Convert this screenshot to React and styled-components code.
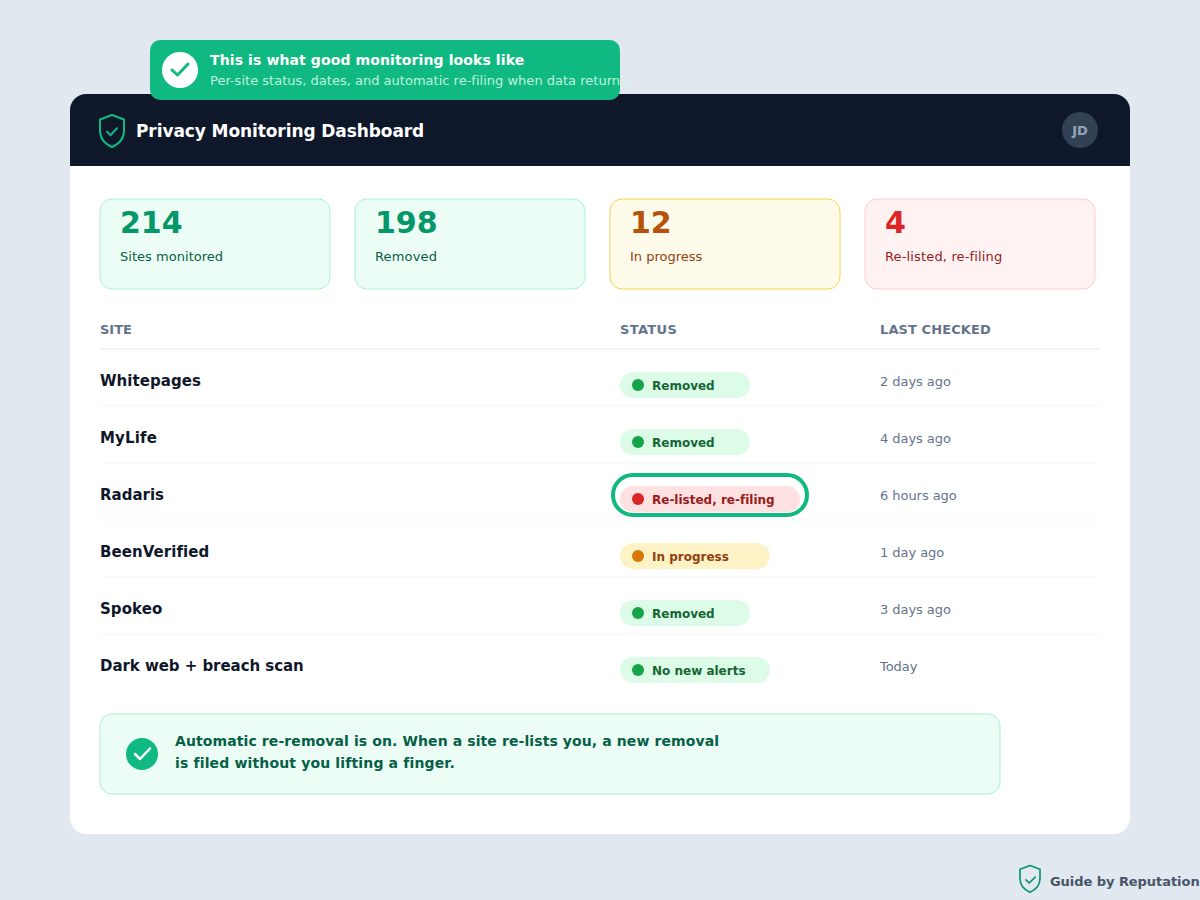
import React from "react";
import styled, { createGlobalStyle, css } from "styled-components";

const GlobalStyle = createGlobalStyle`
  *, *::before {
    box-sizing: border-box;
  }
  body {
    margin: 0;
    background: #e2e8f0;
    font-family: "DejaVu Sans", sans-serif;
    font-variant-ligatures: none;
  }
  p, h1 {
    margin: 0;
  }
`;

const tones = {
  green: {
    fill: "#ecfdf5",
    border: "#a7f3d0",
    value: "#059669",
    label: "#065f46",
    pill: "#dcfce7",
    dot: "#16a34a",
    text: "#166534",
  },
  amber: {
    fill: "#fffbeb",
    border: "#fcd34d",
    value: "#b45309",
    label: "#92400e",
    pill: "#fef3c7",
    dot: "#d97706",
    text: "#92400e",
  },
  red: {
    fill: "#fef2f2",
    border: "#fecaca",
    value: "#dc2626",
    label: "#991b1b",
    pill: "#fee2e2",
    dot: "#dc2626",
    text: "#991b1b",
  },
};

const stats = [
  { value: "214", label: "Sites monitored", tone: "green", tracking: 0.03 },
  { value: "198", label: "Removed", tone: "green", tracking: 0.15 },
  { value: "12", label: "In progress", tone: "amber" },
  { value: "4", label: "Re-listed, re-filing", tone: "red", tracking: 0.15 },
];

const sites = [
  { name: "Whitepages", status: "Removed", tone: "green", width: 130, checked: "2 days ago" },
  { name: "MyLife", status: "Removed", tone: "green", width: 130, checked: "4 days ago", tracking: 0.15 },
  { name: "Radaris", status: "Re-listed, re-filing", tone: "red", width: 180, checked: "6 hours ago", highlight: true, tracking: 0 },
  { name: "BeenVerified", status: "In progress", tone: "amber", width: 150, checked: "1 day ago" },
  { name: "Spokeo", status: "Removed", tone: "green", width: 130, checked: "3 days ago" },
  { name: "Dark web + breach scan", status: "No new alerts", tone: "green", width: 150, checked: "Today", tracking: -0.05 },
];

// hairline frame that sits on the half pixel, so it stays soft
const softFrame = css`
  position: relative;
  z-index: 0;
  &::before {
    content: "";
    position: absolute;
    z-index: -1;
    top: 0;
    left: 0;
    width: calc(100% - 1px);
    height: calc(100% - 1px);
    transform: translate(0.5px, 0.5px);
    border: 1px solid ${({ $tone }) => tones[$tone].border};
    border-radius: 12.5px;
    background: ${({ $tone }) => tones[$tone].fill};
  }
`;

const Page = styled.div`
  position: relative;
  display: flex;
  flex-direction: column;
  width: 1200px;
  height: 900px;
  padding: 94px 0 0 70px;
  overflow: hidden;
  background: #e2e8f0;
`;

const Banner = styled.div`
  position: absolute;
  top: 40px;
  left: 150px;
  z-index: 1;
  display: flex;
  gap: 12px;
  width: 470px;
  height: 60px;
  padding: 12px;
  border-radius: 10px;
  background: #10b981;
  white-space: nowrap;
  svg {
    flex-shrink: 0;
  }
`;

const BannerTitle = styled.p`
  font-size: 14px;
  font-weight: 700;
  line-height: 16px;
  letter-spacing: 0.11px;
  color: #ffffff;
`;

const BannerText = styled.p`
  margin-top: 5px;
  font-size: 13px;
  line-height: 16px;
  letter-spacing: 0.01px;
  color: #d1fae5;
  opacity: 0.9;
`;

const Card = styled.div`
  width: 1060px;
  height: 740px;
  flex-shrink: 0;
  border-radius: 16px;
  background: #ffffff;
`;

const Header = styled.header`
  display: flex;
  align-items: center;
  height: 72px;
  padding: 0 32px 0 28px;
  border-radius: 16px 16px 0 0;
  background: #0f172a;
`;

const Title = styled.h1`
  margin-left: 10px;
  padding-top: 2px;
  font-size: 17px;
  font-weight: 700;
  line-height: 20px;
  letter-spacing: -0.09px;
  color: #ffffff;
`;

const Avatar = styled.div`
  margin-left: auto;
  width: 36px;
  height: 36px;
  border-radius: 50%;
  background: #334155;
  color: #94a3b8;
  font-size: 13px;
  font-weight: 700;
  line-height: 37px;
  text-align: center;
`;

const Body = styled.div`
  padding: 32px 29px 0;
`;

const StatGrid = styled.div`
  display: grid;
  grid-template-columns: repeat(4, 232px);
  column-gap: 23px;
`;

const StatCard = styled.div`
  ${softFrame}
  height: 92px;
  padding: 7px 21px;
`;

const StatValue = styled.p`
  font-size: 30px;
  font-weight: 700;
  line-height: 36px;
  color: ${({ $tone }) => tones[$tone].value};
`;

const StatLabel = styled.p`
  margin-top: 8px;
  font-size: 13px;
  line-height: 16px;
  letter-spacing: ${({ $tracking = 0 }) => $tracking}px;
  color: ${({ $tone }) => tones[$tone].label};
`;

const Table = styled.div`
  margin: 32px 0 0 1px;
  width: 1000px;
`;

const Row = styled.div`
  display: grid;
  grid-template-columns: 520px 260px 220px;
  height: 57px;
  border-bottom: 2px solid ${({ $last }) => ($last ? "transparent" : "#f8fafc")};
`;

const HeadRow = styled(Row)`
  height: 28px;
  border-bottom-color: #f1f5f9;
`;

const HeadCell = styled.div`
  font-size: 13px;
  font-weight: 700;
  line-height: 15px;
  letter-spacing: ${({ $tracking = 0 }) => $tracking}px;
  color: #64748b;
`;

const SiteName = styled.div`
  padding-top: 21px;
  font-size: 15px;
  font-weight: 700;
  line-height: 20px;
  letter-spacing: ${({ $tracking = 0.07 }) => $tracking}px;
  color: #0f172a;
`;

const Checked = styled.div`
  padding-top: 22px;
  font-size: 13px;
  line-height: 20px;
  letter-spacing: -0.05px;
  color: #64748b;
`;

const StatusCell = styled.div`
  position: relative;
  padding-top: 22px;
`;

const Pill = styled.div`
  display: flex;
  align-items: center;
  gap: 8px;
  width: ${({ $width }) => $width}px;
  height: 26px;
  padding-left: 12px;
  border-radius: 13px;
  background: ${({ $tone }) => tones[$tone].pill};
  color: ${({ $tone }) => tones[$tone].text};
  font-size: 12px;
  font-weight: 700;
  line-height: 24px;
  white-space: nowrap;
`;

const PillText = styled.span`
  padding-top: 2px;
`;

const Dot = styled.span`
  width: 12px;
  height: 12px;
  border-radius: 50%;
  background: ${({ $tone }) => tones[$tone].dot};
`;

const Ring = styled.span`
  position: absolute;
  top: 9px;
  left: -9px;
  width: 198px;
  height: 44px;
  border: 4px solid #10b981;
  border-radius: 22px;
`;

const Notice = styled.div`
  ${softFrame}
  display: flex;
  align-items: center;
  gap: 17px;
  width: 902px;
  height: 82px;
  margin-top: 21px;
  padding-left: 27px;
`;

const NoticeText = styled.div`
  margin-top: -5px;
  font-size: 14px;
  font-weight: 700;
  line-height: 22px;
  color: #065f46;
`;

const NoticeLine = styled.p`
  letter-spacing: ${({ $tracking }) => $tracking}px;
`;

const Footer = styled.footer`
  display: flex;
  gap: 8px;
  margin: 29px 0 0 948px;
  white-space: nowrap;
  svg {
    flex-shrink: 0;
  }
`;

const FooterText = styled.p`
  padding-top: 11px;
  font-size: 13px;
  font-weight: 700;
  line-height: 16px;
  letter-spacing: -0.05px;
  color: #475569;
`;

const IconShield = ({ width, height, color, check = "M9 19.8 L12.5 23.2 L19 16.2" }) => (
  <svg width={width} height={height} viewBox="0 0 28 36" fill="none">
    <path
      d="M14 3 L26 7.5 V18.5 C26 27 21 32 14 35 C7 32 2 27 2 18.5 V7.5 Z"
      stroke={color}
      strokeWidth="2"
      strokeLinejoin="round"
    />
    <path
      d={check}
      stroke={color}
      strokeWidth="2"
      strokeLinecap="round"
      strokeLinejoin="round"
    />
  </svg>
);

const IconCheck = ({ size, fill, stroke, strokeWidth, d }) => (
  <svg width={size} height={size} viewBox={`0 0 ${size} ${size}`} fill="none">
    <circle cx={size / 2} cy={size / 2} r={size / 2} fill={fill} />
    <path
      d={d}
      stroke={stroke}
      strokeWidth={strokeWidth}
      strokeLinecap="round"
      strokeLinejoin="round"
    />
  </svg>
);

const App = () => {
  return (
    <>
      <GlobalStyle />
      <Page>
        <Banner>
          <IconCheck
            size={36}
            fill="#ffffff"
            stroke="#10b981"
            strokeWidth={3}
            d="M10 18 L15.5 23 L26 12"
          />
          <div>
            <BannerTitle>This is what good monitoring looks like</BannerTitle>
            <BannerText>
              Per-site status, dates, and automatic re-filing when data returns.
            </BannerText>
          </div>
        </Banner>
        <Card>
          <Header>
            <IconShield width={28} height={36} color="#10b981" />
            <Title>Privacy Monitoring Dashboard</Title>
            <Avatar>JD</Avatar>
          </Header>
          <Body>
            <StatGrid>
              {stats.map((item) => (
                <StatCard key={item.label} $tone={item.tone}>
                  <StatValue $tone={item.tone}>{item.value}</StatValue>
                  <StatLabel $tone={item.tone} $tracking={item.tracking}>
                    {item.label}
                  </StatLabel>
                </StatCard>
              ))}
            </StatGrid>
            <Table>
              <HeadRow>
                <HeadCell>SITE</HeadCell>
                <HeadCell $tracking={0.35}>STATUS</HeadCell>
                <HeadCell $tracking={0.1}>LAST CHECKED</HeadCell>
              </HeadRow>
              {sites.map((site, index) => (
                <Row key={site.name} $last={index === sites.length - 1}>
                  <SiteName $tracking={site.tracking}>{site.name}</SiteName>
                  <StatusCell>
                    <Pill $tone={site.tone} $width={site.width}>
                      <Dot $tone={site.tone} />
                      <PillText>{site.status}</PillText>
                    </Pill>
                    {site.highlight && <Ring />}
                  </StatusCell>
                  <Checked>{site.checked}</Checked>
                </Row>
              ))}
            </Table>
            <Notice $tone="green">
              <IconCheck
                size={32}
                fill="#10b981"
                stroke="#ffffff"
                strokeWidth={2.5}
                d="M9 16 L14 21 L24 10.5"
              />
              <NoticeText>
                <NoticeLine $tracking={0.1}>
                  Automatic re-removal is on. When a site re-lists you, a new removal
                </NoticeLine>
                <NoticeLine $tracking={0.15}>
                  is filed without you lifting a finger.
                </NoticeLine>
              </NoticeText>
            </Notice>
          </Body>
        </Card>
        <Footer>
          <IconShield
            width={24}
            height={30}
            color="#059669"
            check="M9.2 20.2 L13 24 L20.2 17"
          />
          <FooterText>Guide by Reputation</FooterText>
        </Footer>
      </Page>
    </>
  );
};

export default App;
